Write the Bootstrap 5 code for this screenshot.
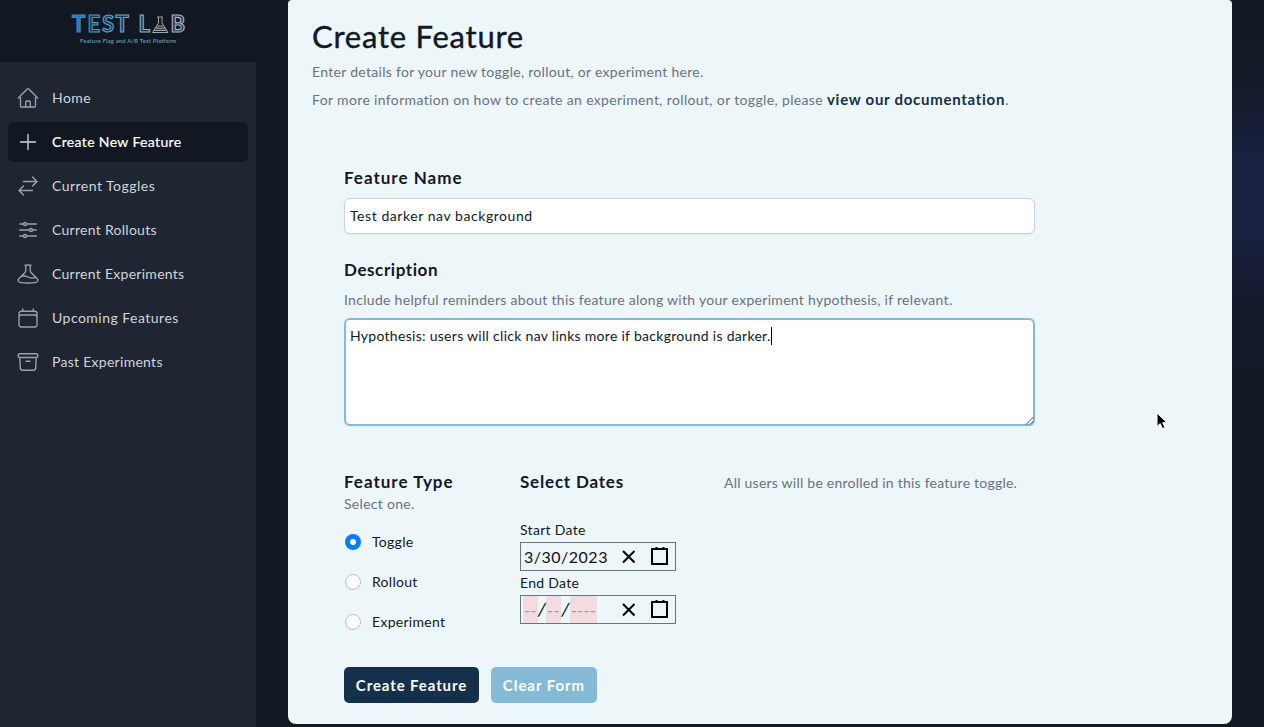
<!DOCTYPE html>
<html lang="en">
<head>
<meta charset="utf-8">
<meta name="viewport" content="width=device-width, initial-scale=1">
<title>Test Lab - Create Feature</title>
<link rel="stylesheet" href="https://cdn.jsdelivr.net/npm/bootstrap@5.3.0/dist/css/bootstrap.min.css">
<style>
  body { font-family: Lato, "Open Sans", sans-serif; font-size: 14px; line-height: 20px; letter-spacing: .295px; color: #111827;
    background: linear-gradient(180deg, #111821 0, #121a26 70px, #1a2140 160px, #1a2140 225px, #141a2b 310px, #111821 400px); height: 727px; overflow: hidden; }
  .gutter { background: #111821; width: 288px; height: 727px; }
  .sidebar { width: 256px; }
  .brand { height: 62px; }
  .side-menu { background: #1f2531; height: 665px; padding: 16px 8px; gap: 4px; }
  .side-menu .nav-link { height: 40px; padding: 0 8px; gap: 12px; color: #d1d5db; border-radius: 6px; line-height: 20px; letter-spacing: .28px; }
  .side-menu .nav-link.wide { letter-spacing: .48px; }
  .side-menu .nav-link svg { width: 24px; height: 24px; fill: none; stroke: #9ca3af; stroke-width: 1.35; stroke-linecap: round; stroke-linejoin: round; flex: none; }
  .side-menu .nav-link.active { background: #111821; color: #fff; letter-spacing: .36px; -webkit-text-stroke: .2px #fff; }
  .side-menu .nav-link.active svg { stroke: #d1d5db; }
  .panel { width: 944px; height: 724px; background: #edf6f9; border-radius: 4px 4px 8px 8px; padding: 16px 24px 0; }
  .page-title { font-size: 31px; line-height: 40px; letter-spacing: .76px; font-weight: 400; margin: 0; -webkit-text-stroke: .4px #111827; }
  .muted { color: #6b7280; }
  .lead-in { margin: 6px 0 8px; }
  .more-info { letter-spacing: .355px; height: 20px; }
  .doc-link { color: #14304a; font-size: 15px; line-height: 1; font-weight: 700; letter-spacing: .72px; text-decoration: none; }
  .form-area { margin: 56px 0 0 32px; }
  .section-label { display: block; font-size: 17px; line-height: 24px; font-weight: 700; white-space: nowrap; }
  .label-name { letter-spacing: 1px; }
  .label-desc { letter-spacing: .58px; }
  .label-type { letter-spacing: 1px; }
  .label-dates { letter-spacing: .8px; }
  .entry { width: 691px; font-size: 14px; line-height: 20px; letter-spacing: .29px; color: #111827; border-radius: 6px; }
  .entry-name { height: 36px; padding: 6px 5px 8px; margin-top: 8px; border: 1px solid #cdd3da; letter-spacing: .56px; box-shadow: 0 1px 2px rgba(0,0,0,.05); }
  .entry-text { position: relative; height: 108px; margin-top: 8px; padding: 6px 4px; background: #fff; border: 2px solid #84bad6; box-shadow: 0 1px 2px rgba(0,0,0,.05); }
  .caret { display: inline-block; width: 1px; height: 18px; background: #000; vertical-align: -4px; }
  .grip { position: absolute; right: -1px; bottom: -1px; width: 9px; height: 9px; }
  .options { margin-top: 44px; }
  .col-type { width: 176px; }
  .col-dates { width: 204px; }
  .choices { gap: 20px; margin-top: 18px; }
  .choice { height: 20px; min-height: 0; gap: 11px; padding-left: 1px; margin: 0; }
  .choice .form-check-input { width: 16px; height: 16px; margin: 0 !important; border-color: #b9bcc2; background-color: #fff; }
  .choice .form-check-input:checked { border: 0; background: radial-gradient(circle, #fff 0 2.700px, #0a7aff 3.300px); }
  .dates-first { margin-top: 26px; }
  .date-box { width: 156px; height: 29px; border: 1px solid #6c7379; margin: 2px 0; font-size: 16px; line-height: 27px; letter-spacing: .5px; color: #111; white-space: nowrap; }
  .date-box svg { flex: none; }
  .date-text { width: 97px; padding-left: 3px; }
  .date-parts { padding-left: 2px; }
  .blank { width: 15px; height: 27px; background: #f3dbe0; color: #999; text-align: center; letter-spacing: .3px; overflow: hidden; flex: none; }
  .blank-year { width: 27px; }
  .slash { width: 8px; text-align: center; letter-spacing: 0; flex: none; transform: skewX(-8deg); font-size: 18px; }
  .slash-last { width: 9px; }
  .enroll-note { margin-top: 3px; letter-spacing: .23px; }
  .actions { gap: 12px; margin-top: 35px; }
  .action { height: 36px; padding: 0 0 1px; border: 0; border-radius: 5px; color: #fff !important; font-size: 15px; font-weight: 700; line-height: 20px; }
  .action-create { width: 135px; background: #14304a !important; letter-spacing: .9px; }
  .action-clear { width: 106px; background: #84bad6 !important; letter-spacing: .95px; }
  .pointer { position: absolute; left: 1155px; top: 411px; width: 14px; height: 20px; }
</style>
</head>
<body>
<div class="d-flex">
  <div class="gutter flex-shrink-0">
    <aside class="sidebar">
      <div class="brand">
        <svg class="d-block" width="256" height="62" viewBox="0 0 256 62">
          <defs>
            <linearGradient id="tone" gradientUnits="userSpaceOnUse" x1="72" y1="0" x2="185" y2="0">
              <stop offset="0" stop-color="#3387c4"/><stop offset=".5" stop-color="#77abca"/><stop offset=".75" stop-color="#a2b3bd"/><stop offset="1" stop-color="#b9b6b2"/>
            </linearGradient>
          </defs>
          <g font-family="Lato, sans-serif" font-weight="700" font-size="22" fill="#1b3850" stroke="url(#tone)" stroke-width="1.1" letter-spacing="0">
            <text x="72" y="32" fill="#2a76ad">T</text>
            <text x="87.500" y="32">E</text>
            <text x="102" y="32">S</text>
            <text x="115.500" y="32">T</text>
            <text x="138.500" y="32">L</text>
            <text x="170.500" y="32">B</text>
          </g>
          <g fill="none" stroke="#a5a6a7" stroke-width="1">
            <path d="M157 17h6M158.500 17v6l-6 9.500h15.500l-6-9.500v-6"/>
            <path d="M157 26h6.500M155.500 28.200h9.500M154 30.400h12.500" stroke-width="1.200"/>
          </g>
          <text x="80" y="43.300" textLength="96" font-family="Lato, sans-serif" font-size="5.600" font-weight="700" letter-spacing="0" fill="#6593ad">Feature Flag and A/B Test Platform</text>
        </svg>
      </div>
      <nav class="side-menu nav flex-column flex-nowrap">
        <a class="nav-link wide d-flex align-items-center" href="#"><svg viewBox="0 0 24 24"><path d="M2.250 12l8.954-8.955c.44-.439 1.152-.439 1.591 0L21.750 12M4.500 9.750v10.125c0 .621.504 1.125 1.125 1.125H9.750v-4.875c0-.621.504-1.125 1.125-1.125h2.250c.621 0 1.125.504 1.125 1.125V21h4.125c.621 0 1.125-.504 1.125-1.125V9.750M8.250 21h8.250"/></svg>Home</a>
        <a class="nav-link active d-flex align-items-center" href="#"><svg viewBox="0 0 24 24"><path d="M12 4.500v15m7.500-7.500h-15"/></svg>Create New Feature</a>
        <a class="nav-link wide d-flex align-items-center" href="#"><svg viewBox="0 0 24 24"><path d="M7.500 21L3 16.500m0 0L7.500 12M3 16.500h13.500m0-13.500L21 7.500m0 0L16.500 12M21 7.500H7.500"/></svg>Current Toggles</a>
        <a class="nav-link d-flex align-items-center" href="#"><svg viewBox="0 0 24 24"><path d="M10.500 6h9.750M10.500 6a1.500 1.500 0 11-3 0m3 0a1.500 1.500 0 10-3 0M3.750 6H7.500m3 12h9.750m-9.750 0a1.500 1.500 0 01-3 0m3 0a1.500 1.500 0 00-3 0m-3.750 0H7.500m9-6h3.750m-3.750 0a1.500 1.500 0 01-3 0m3 0a1.500 1.500 0 00-3 0m-9.750 0h9.750"/></svg>Current Rollouts</a>
        <a class="nav-link d-flex align-items-center" href="#"><svg viewBox="0 0 24 24"><path d="M9.750 3.104v5.714a2.250 2.250 0 01-.659 1.591L5 14.500M9.750 3.104c-.251.023-.501.05-.75.082m.75-.082a24.301 24.301 0 014.500 0m0 0v5.714c0 .597.237 1.170.659 1.591L19.800 15.300M14.250 3.104c.251.023.501.05.75.082M19.800 15.300l-1.570.393A9.065 9.065 0 0112 15a9.065 9.065 0 00-6.230-.693L5 14.500m14.800.8l1.402 1.402c1.232 1.232.65 3.318-1.067 3.611A48.309 48.309 0 0112 21c-2.773 0-5.491-.235-8.135-.687-1.718-.293-2.300-2.379-1.067-3.610L5 14.500"/></svg>Current Experiments</a>
        <a class="nav-link wide d-flex align-items-center" href="#"><svg viewBox="0 0 24 24"><path d="M6.750 3v2.250M17.250 3v2.250M3 18.750V7.500a2.250 2.250 0 012.250-2.250h13.500A2.250 2.250 0 0121 7.500v11.250m-18 0A2.250 2.250 0 005.250 21h13.500A2.250 2.250 0 0021 18.750m-18 0v-7.500A2.250 2.250 0 015.250 9h13.500A2.250 2.250 0 0121 11.250v7.500"/></svg>Upcoming Features</a>
        <a class="nav-link d-flex align-items-center" href="#"><svg viewBox="0 0 24 24"><path d="M20.250 7.500l-.625 10.632a2.250 2.250 0 01-2.247 2.118H6.622a2.250 2.250 0 01-2.247-2.118L3.750 7.500M10 11.250h4M3.375 7.500h17.250c.621 0 1.125-.504 1.125-1.125v-1.500c0-.621-.504-1.125-1.125-1.125H3.375c-.621 0-1.125.504-1.125 1.125v1.500c0 .621.504 1.125 1.125 1.125z"/></svg>Past Experiments</a>
      </nav>
    </aside>
  </div>

  <main class="panel flex-shrink-0">
    <h1 class="page-title">Create Feature</h1>
    <p class="muted lead-in">Enter details for your new toggle, rollout, or experiment here.</p>
    <p class="muted mb-0 text-nowrap more-info">For more information on how to create an experiment, rollout, or toggle, please <a class="doc-link" href="#">view our documentation</a>.</p>

    <form class="form-area">
      <label class="section-label label-name" for="feature-name">Feature Name</label>
      <input id="feature-name" class="form-control entry entry-name" type="text" value="Test darker nav background">

      <div class="section-label label-desc mt-4">Description</div>
      <p class="muted mt-2 mb-0">Include helpful reminders about this feature along with your experiment hypothesis, if relevant.</p>
      <div class="entry entry-text">Hypothesis: users will click nav links more if background is darker.<span class="caret"></span>
        <svg class="grip" viewBox="0 0 9 9"><path d="M1 8.500L8.500 1M5 8.500L8.500 5" stroke="#33424f" stroke-width=".9" fill="none"/></svg>
      </div>

      <div class="options d-flex">
        <div class="col-type">
          <div class="section-label label-type">Feature Type</div>
          <p class="muted mb-0">Select one.</p>
          <div class="choices d-flex flex-column">
            <label class="choice form-check d-flex align-items-center"><input class="form-check-input" type="radio" name="kind" checked><span>Toggle</span></label>
            <label class="choice form-check d-flex align-items-center"><input class="form-check-input" type="radio" name="kind"><span>Rollout</span></label>
            <label class="choice form-check d-flex align-items-center"><input class="form-check-input" type="radio" name="kind"><span>Experiment</span></label>
          </div>
        </div>
        <div class="col-dates">
          <div class="section-label label-dates">Select Dates</div>
          <div class="dates-first">Start Date</div>
          <div class="date-box d-flex">
            <span class="date-text">3/30/2023</span>
            <svg width="56" height="27" viewBox="0 0 56 27" fill="none" stroke="#000" stroke-width="2"><path d="M5 8l11.500 11.500M16.500 8L5 19.500"/><path d="M34 6h15v15H34zM38.500 4V7M45.500 4V7"/></svg>
          </div>
          <div>End Date</div>
          <div class="date-box d-flex">
            <span class="date-text date-parts d-flex"><span class="blank">--</span><span class="slash">/</span><span class="blank">--</span><span class="slash slash-last">/</span><span class="blank blank-year">----</span></span>
            <svg width="56" height="27" viewBox="0 0 56 27" fill="none" stroke="#000" stroke-width="2"><path d="M5 8l11.500 11.500M16.500 8L5 19.500"/><path d="M34 6h15v15H34zM38.500 4V7M45.500 4V7"/></svg>
          </div>
        </div>
        <p class="muted mb-0 enroll-note">All users will be enrolled in this feature toggle.</p>
      </div>

      <div class="actions d-flex">
        <button class="btn action action-create" type="button">Create Feature</button>
        <button class="btn action action-clear" type="button">Clear Form</button>
      </div>
    </form>
  </main>
</div>
<svg class="pointer" viewBox="0 0 14 20"><path d="M2 2v13.500l3.200-2.900 2.300 5 2.500-1.100-2.300-4.800h4.300z" fill="#000" stroke="#fff" stroke-width="1"/></svg>
<script src="https://cdn.jsdelivr.net/npm/bootstrap@5.3.0/dist/js/bootstrap.bundle.min.js"></script>
</body>
</html>
